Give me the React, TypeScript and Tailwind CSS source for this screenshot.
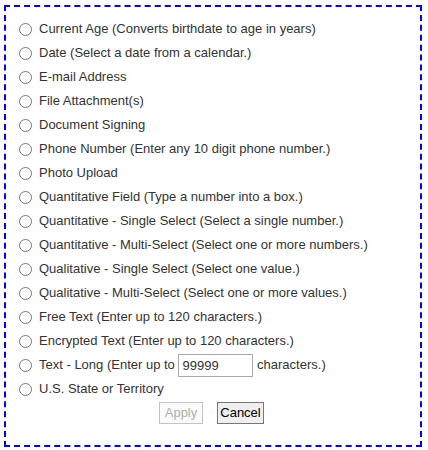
const options = [
  'Current Age (Converts birthdate to age in years)',
  'Date (Select a date from a calendar.)',
  'E-mail Address',
  'File Attachment(s)',
  'Document Signing',
  'Phone Number (Enter any 10 digit phone number.)',
  'Photo Upload',
  'Quantitative Field (Type a number into a box.)',
  'Quantitative - Single Select (Select a single number.)',
  'Quantitative - Multi-Select (Select one or more numbers.)',
  'Qualitative - Single Select (Select one value.)',
  'Qualitative - Multi-Select (Select one or more values.)',
  'Free Text (Enter up to 120 characters.)',
  'Encrypted Text (Enter up to 120 characters.)',
];

function Radio() {
  return (
    <span className="w-[13px] h-[13px] rounded-full border border-[#767676] bg-white shrink-0" />
  );
}

export default function App() {
  return (
    <div className="pl-[4px] pt-[5px] bg-white" style={{ fontFamily: '"Liberation Sans", Arial, sans-serif' }}>
      <div className="w-[418px] h-[442px] border-2 border-dashed border-[#0000ff] pt-[10px] pl-[13px] text-[13px] text-[#333]">
        {options.map((o) => (
          <label key={o} className="flex items-center h-6 gap-[7px]">
            <Radio />
            <span>{o}</span>
          </label>
        ))}
        <label className="flex items-center h-6 gap-[7px]">
          <Radio />
          <span className="flex items-center">
            Text - Long (Enter up to&nbsp;
            <input
              defaultValue="99999"
              className="w-[75px] h-[23px] border border-[#a9a9a9] px-[3px] text-[13px] text-[#333] outline-none"
              style={{ fontFamily: '"Liberation Sans", Arial, sans-serif' }}
            />
            &nbsp;characters.)
          </span>
        </label>
        <label className="flex items-center h-6 gap-[7px]">
          <Radio />
          <span>U.S. State or Territory</span>
        </label>
        <div className="flex justify-center gap-[14px] pr-[16px] mt-[1px]">
          <button disabled className="w-[44px] h-[22px] border border-[#c4c4c4] bg-[#fafafa] text-[#b0b0b0] text-[13px]">
            Apply
          </button>
          <button className="w-[47px] h-[22px] border border-[#767676] bg-[#efefef] text-black text-[13px]">
            Cancel
          </button>
        </div>
      </div>
    </div>
  );
}
